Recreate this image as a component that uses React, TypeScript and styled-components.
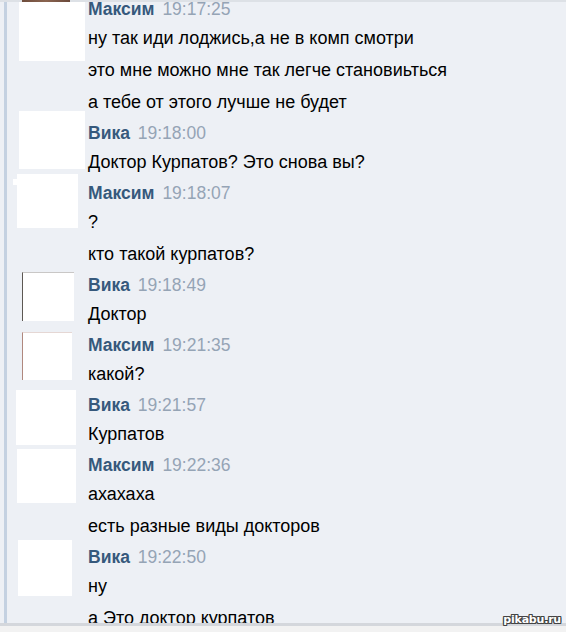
import React from "react";
import styled, { createGlobalStyle } from "styled-components";

const GlobalStyle = createGlobalStyle`
  html, body { margin: 0; padding: 0; background: #edf0f5; }
  body { font-family: "Liberation Sans", Arial, sans-serif; }
`;

const Page = styled.div`
  position: relative;
  width: 566px;
  height: 632px;
  overflow: hidden;
  display: flex;
  flex-direction: column;
  background: #edf0f5;
`;

const TopBar = styled.div`
  flex: none;
  height: 2px;
  background: linear-gradient(
    to right,
    #dde1e6 0,
    #dde1e6 22px,
    #6e4c3c 22px,
    #8a6450 46px,
    #6b4a3b 70px,
    #dde1e6 70px
  );
`;

const Main = styled.div`
  flex: 1;
  min-height: 0;
  display: flex;
  overflow: hidden;
`;

const Stripe = styled.div`
  flex: none;
  width: 3px;
  margin-left: 4px;
  background: #c4d1e1;
`;

const Feed = styled.div`
  flex: 1;
  display: flex;
  flex-direction: column;
  gap: 3px;
  margin-top: -5px;
`;

const Group = styled.div`
  display: grid;
  grid-template-columns: 81px 1fr;
  align-items: start;
`;

const Avatar = styled.div<{ $x: number; $y: number; $w: number; $h: number; $edge?: string; $nub?: boolean }>`
  position: relative;
  margin-left: ${(p) => p.$x}px;
  margin-top: ${(p) => p.$y}px;
  width: ${(p) => p.$w}px;
  height: ${(p) => p.$h}px;
  background: #ffffff;
  box-sizing: border-box;
  ${(p) => (p.$edge ? `border-left: 1px solid ${p.$edge}; border-top: 1px solid ${p.$edge}55;` : "")}
  ${(p) =>
    p.$nub
      ? `&::before { content: ""; position: absolute; left: -4px; top: 5px; width: 4px; height: 6px; background: #fff; }`
      : ""}
`;

const Body = styled.div`
  display: flex;
  flex-direction: column;
`;

const Header = styled.div`
  height: 25px;
  line-height: 25px;
  font-size: 17.5px;
  white-space: nowrap;
`;

const Name = styled.span`
  font-weight: bold;
  color: #36597c;
  margin-right: 3px;
`;

const Time = styled.span`
  color: #95a4b5;
`;

const Message = styled.div`
  height: 32px;
  line-height: 32px;
  font-size: 18px;
  color: #000;
  white-space: nowrap;
`;

const BottomLine = styled.div`
  flex: none;
  height: 3px;
  background: #d4d7dc;
`;

const BottomArea = styled.div`
  flex: none;
  height: 6px;
  background: #f2f2f2;
`;

const Watermark = styled.div`
  position: absolute;
  right: 5px;
  bottom: 6px;
  font-family: "DejaVu Sans", "Liberation Sans", sans-serif;
  font-size: 11px;
  font-weight: bold;
  color: #ffffff;
  letter-spacing: -0.2px;
  text-shadow: 1px 0 0 #444, -1px 0 0 #444, 0 1px 0 #444, 0 -1px 0 #444,
    1px 1px 0 #444, -1px -1px 0 #444, 1px -1px 0 #444, -1px 1px 0 #444;
`;

type AvatarSpec = { x: number; y: number; w: number; h: number; edge?: string; nub?: boolean };
type GroupSpec = { name: string; time: string; messages: string[]; avatar: AvatarSpec };

const groups: GroupSpec[] = [
  {
    name: "Максим",
    time: "19:17:25",
    messages: [
      "ну так иди лоджись,а не в комп смотри",
      "это мне можно мне так легче становиьться",
      "а тебе от этого лучше не будет",
    ],
    avatar: { x: 12, y: 5, w: 66, h: 59 },
  },
  {
    name: "Вика",
    time: "19:18:00",
    messages: ["Доктор Курпатов? Это снова вы?"],
    avatar: { x: 12, y: -10, w: 66, h: 58 },
  },
  {
    name: "Максим",
    time: "19:18:07",
    messages: ["?", "кто такой курпатов?"],
    avatar: { x: 10, y: -7, w: 61, h: 54, nub: true },
  },
  {
    name: "Вика",
    time: "19:18:49",
    messages: ["Доктор"],
    avatar: { x: 15, y: -1, w: 52, h: 49, edge: "#5d5853" },
  },
  {
    name: "Максим",
    time: "19:21:35",
    messages: ["какой?"],
    avatar: { x: 15, y: -1, w: 50, h: 48, edge: "#b0887e" },
  },
  {
    name: "Вика",
    time: "19:21:57",
    messages: ["Курпатов"],
    avatar: { x: 9, y: -3, w: 60, h: 55 },
  },
  {
    name: "Максим",
    time: "19:22:36",
    messages: ["ахахаха", "есть разные виды докторов"],
    avatar: { x: 10, y: -4, w: 59, h: 54 },
  },
  {
    name: "Вика",
    time: "19:22:50",
    messages: ["ну", "а Это доктор курпатов"],
    avatar: { x: 11, y: -5, w: 54, h: 56 },
  },
];

export default function App() {
  return (
    <>
      <GlobalStyle />
      <Page>
        <TopBar />
        <Main>
          <Stripe />
          <Feed>
            {groups.map((g, i) => (
              <Group key={i}>
                <Avatar
                  $x={g.avatar.x}
                  $y={g.avatar.y}
                  $w={g.avatar.w}
                  $h={g.avatar.h}
                  $edge={g.avatar.edge}
                  $nub={g.avatar.nub}
                />
                <Body>
                  <Header>
                    <Name>{g.name}</Name> <Time>{g.time}</Time>
                  </Header>
                  {g.messages.map((m, j) => (
                    <Message key={j}>{m}</Message>
                  ))}
                </Body>
              </Group>
            ))}
          </Feed>
        </Main>
        <BottomLine />
        <BottomArea />
        <Watermark>pikabu.ru</Watermark>
      </Page>
    </>
  );
}
